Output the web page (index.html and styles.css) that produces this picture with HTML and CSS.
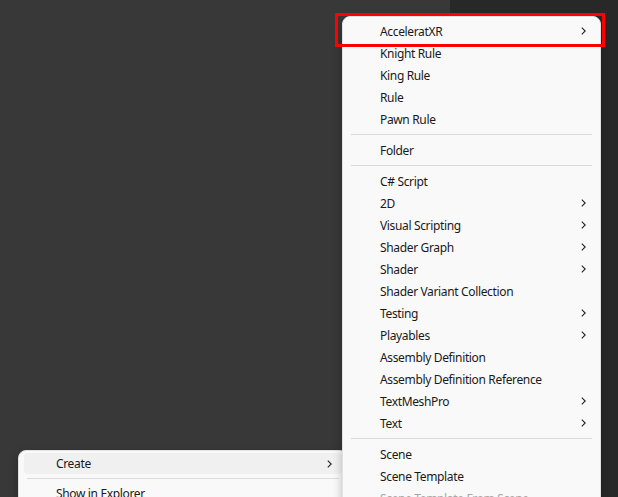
FILE: index.html
```html
<!DOCTYPE html>
<html>
<head>
<meta charset="utf-8">
<link rel="stylesheet" href="styles.css">
</head>
<body>
<div class="editor">
  <div class="panel panel-left"></div>
  <div class="panel panel-right"></div>
</div>

<div class="menu menu-parent">
  <div class="item item-hover"><span>Create</span><svg class="chev" width="5" height="8" viewBox="0 0 5 8"><path d="M0.8 0.6 L4.2 4 L0.8 7.4" fill="none" stroke="#222" stroke-width="1.1"/></svg></div>
  <div class="sep"></div>
  <div class="item"><span>Show in Explorer</span></div>
</div>

<div class="menu menu-sub">
  <div class="item"><span>AcceleratXR</span><svg class="chev" width="5" height="8" viewBox="0 0 5 8"><path d="M0.8 0.6 L4.2 4 L0.8 7.4" fill="none" stroke="#222" stroke-width="1.1"/></svg></div>
  <div class="item"><span>Knight Rule</span></div>
  <div class="item"><span>King Rule</span></div>
  <div class="item"><span>Rule</span></div>
  <div class="item"><span>Pawn Rule</span></div>
  <div class="sep"></div>
  <div class="item"><span>Folder</span></div>
  <div class="sep"></div>
  <div class="item"><span>C# Script</span></div>
  <div class="item"><span>2D</span><svg class="chev" width="5" height="8" viewBox="0 0 5 8"><path d="M0.8 0.6 L4.2 4 L0.8 7.4" fill="none" stroke="#222" stroke-width="1.1"/></svg></div>
  <div class="item"><span>Visual Scripting</span><svg class="chev" width="5" height="8" viewBox="0 0 5 8"><path d="M0.8 0.6 L4.2 4 L0.8 7.4" fill="none" stroke="#222" stroke-width="1.1"/></svg></div>
  <div class="item"><span>Shader Graph</span><svg class="chev" width="5" height="8" viewBox="0 0 5 8"><path d="M0.8 0.6 L4.2 4 L0.8 7.4" fill="none" stroke="#222" stroke-width="1.1"/></svg></div>
  <div class="item"><span>Shader</span><svg class="chev" width="5" height="8" viewBox="0 0 5 8"><path d="M0.8 0.6 L4.2 4 L0.8 7.4" fill="none" stroke="#222" stroke-width="1.1"/></svg></div>
  <div class="item"><span>Shader Variant Collection</span></div>
  <div class="item"><span>Testing</span><svg class="chev" width="5" height="8" viewBox="0 0 5 8"><path d="M0.8 0.6 L4.2 4 L0.8 7.4" fill="none" stroke="#222" stroke-width="1.1"/></svg></div>
  <div class="item"><span>Playables</span><svg class="chev" width="5" height="8" viewBox="0 0 5 8"><path d="M0.8 0.6 L4.2 4 L0.8 7.4" fill="none" stroke="#222" stroke-width="1.1"/></svg></div>
  <div class="item"><span>Assembly Definition</span></div>
  <div class="item"><span>Assembly Definition Reference</span></div>
  <div class="item"><span>TextMeshPro</span><svg class="chev" width="5" height="8" viewBox="0 0 5 8"><path d="M0.8 0.6 L4.2 4 L0.8 7.4" fill="none" stroke="#222" stroke-width="1.1"/></svg></div>
  <div class="item"><span>Text</span><svg class="chev" width="5" height="8" viewBox="0 0 5 8"><path d="M0.8 0.6 L4.2 4 L0.8 7.4" fill="none" stroke="#222" stroke-width="1.1"/></svg></div>
  <div class="sep"></div>
  <div class="item"><span>Scene</span></div>
  <div class="item"><span>Scene Template</span></div>
  <div class="item item-disabled"><span>Scene Template From Scene</span></div>
</div>

<div class="highlight-box"></div>
</body>
</html>
```
FILE: styles.css
```css
html, body {
  margin: 0;
  padding: 0;
}
body {
  width: 618px;
  height: 497px;
  overflow: hidden;
  position: relative;
  font-family: "Noto Sans", "Open Sans", sans-serif;
  font-size: 12px;
  letter-spacing: -0.35px;
  color: #1a1a1a;
}
.editor {
  display: flex;
  height: 100%;
}
.panel-left {
  width: 450px;
  background: #383838;
}
.panel-right {
  flex: 1;
  background: #282828;
}
.menu {
  position: absolute;
  background: #f9f9f9;
  border: 1px solid #e2e2e2;
  border-radius: 8px;
  box-shadow: 0 4px 10px rgba(0,0,0,0.25);
  display: flex;
  flex-direction: column;
  box-sizing: border-box;
  overflow: hidden;
}
.menu-parent {
  left: 18px;
  top: 450px;
  width: 330px;
  height: 80px;
  padding: 2px 0;
}
.menu-sub {
  left: 342px;
  top: 16px;
  width: 259px;
  height: 520px;
  padding: 3px 0;
}
.item {
  height: 22px;
  display: flex;
  align-items: center;
  justify-content: space-between;
  padding: 0 14px 0 37px;
  flex-shrink: 0;
  white-space: nowrap;
}
.menu-parent .item {
  margin: 0 5px;
  padding: 0 10px 0 32px;
  border-radius: 4px;
  height: 21px;
}
.item-hover {
  background: #f0f0f0;
}
.item-disabled {
  color: #a8a8a8;
}
.chev {
  display: block;
}
.sep {
  height: 1px;
  background: #dadada;
  margin: 4px 8px 4px 8px;
  flex-shrink: 0;
}
.highlight-box {
  position: absolute;
  left: 335px;
  top: 13px;
  width: 270px;
  height: 34px;
  border: 3px solid #ff0000;
  box-sizing: border-box;
}
```
